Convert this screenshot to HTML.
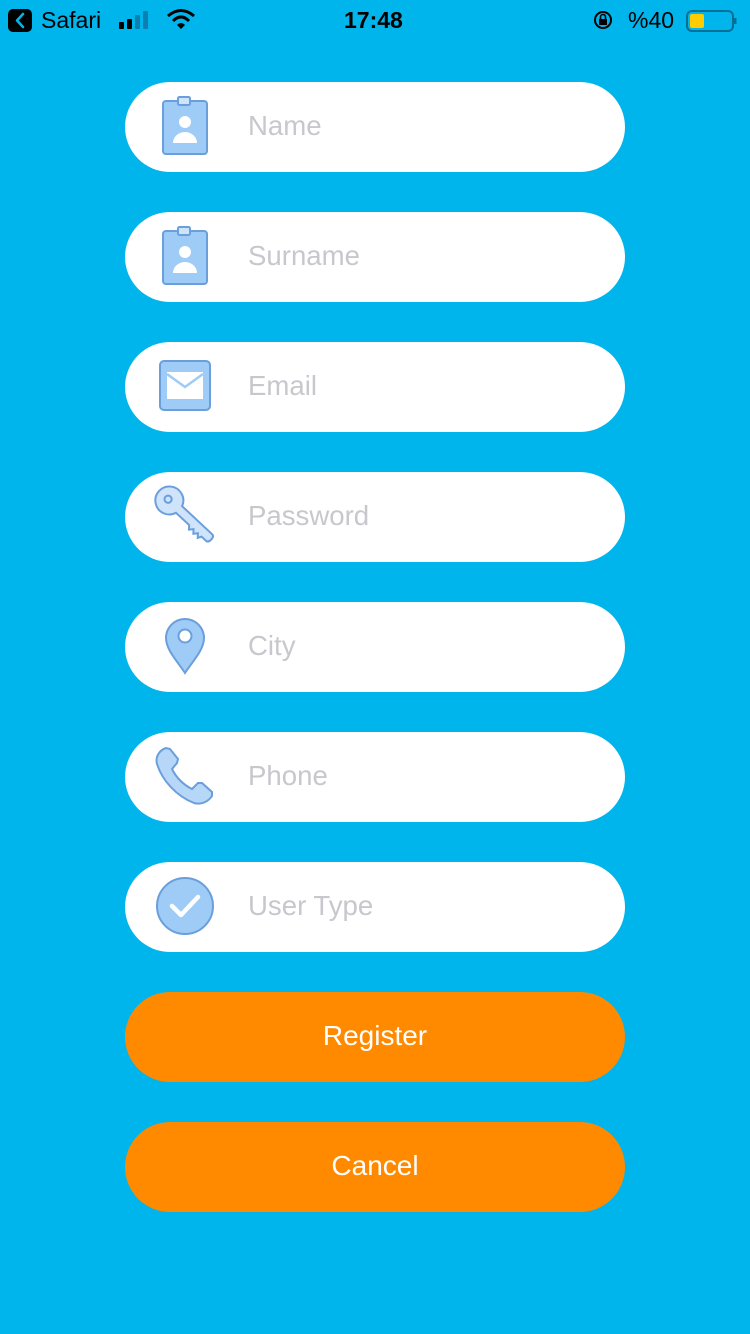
<!DOCTYPE html>
<html><head><meta charset="utf-8"><style>
html,body{margin:0;padding:0}
body{width:750px;height:1334px;background:#00B4EC;position:relative;overflow:hidden;font-family:"Liberation Sans",sans-serif}
.f{position:absolute;left:125px;width:500px;height:90px;border-radius:45px;background:#fff}
.f span{position:absolute;left:123px;top:-1px;line-height:90px;font-size:27.6px;color:#c7c7cd}
.b{position:absolute;left:125px;width:500px;height:90px;border-radius:45px;background:#FF8A00;color:#fff;font-size:28px;text-align:center;line-height:88px}
.sb{position:absolute;top:0;height:40px;line-height:40px;font-size:23px;color:#000}
</style></head><body>
<div class="sb" style="left:8px;width:24px;top:9px;height:23px;background:#000;border-radius:5px"></div>
<svg style="position:absolute;left:8px;top:9px" width="24" height="23"><path d="M15 5 L9 11.5 L15 18" stroke="#00B4EC" stroke-width="2.6" fill="none" stroke-linecap="round" stroke-linejoin="round"/></svg>
<div class="sb" style="left:41px">Safari</div>
<svg style="position:absolute;left:119px;top:10px" width="36" height="20"><rect x="0" y="12" width="5" height="7" rx="1" fill="#000"/><rect x="8" y="9" width="5" height="10" rx="1" fill="#000"/><rect x="16" y="5" width="5" height="14" rx="1" fill="#0a7fb0"/><rect x="24" y="1" width="5" height="18" rx="1" fill="#0a7fb0"/></svg>
<svg style="position:absolute;left:166px;top:8px" width="30" height="22"><path d="M2 8 Q15 -3 28 8" stroke="#000" stroke-width="3" fill="none"/><path d="M7 13 Q15 5 23 13" stroke="#000" stroke-width="3" fill="none"/><path d="M11 17 L15 21 L19 17 Q15 13 11 17Z" fill="#000"/></svg>
<div class="sb" style="left:344px;font-weight:bold">17:48</div>
<svg style="position:absolute;left:592px;top:10px" width="22" height="20"><circle cx="11" cy="10" r="8" stroke="#000" stroke-width="2" fill="none"/><rect x="7" y="9" width="8" height="6" fill="#000"/><path d="M8.5 9 V7 a2.5 2.5 0 0 1 5 0 V9" stroke="#000" stroke-width="1.6" fill="none"/></svg>
<div class="sb" style="left:628px">%40</div>
<svg style="position:absolute;left:686px;top:8px" width="52" height="26"><rect x="1" y="3" width="46" height="20" rx="5" stroke="#0a6f96" stroke-width="2" fill="none"/><rect x="4" y="6" width="14" height="14" rx="2" fill="#FFCC00"/><rect x="48" y="10" width="2.5" height="6" fill="#0a6f96"/></svg>

<div class="f" style="top:82px"><span>Name</span></div>
<div class="f" style="top:212px"><span>Surname</span></div>
<div class="f" style="top:342px"><span>Email</span></div>
<div class="f" style="top:472px"><span>Password</span></div>
<div class="f" style="top:602px"><span>City</span></div>
<div class="f" style="top:732px"><span>Phone</span></div>
<div class="f" style="top:862px"><span>User Type</span></div>
<div class="b" style="top:992px">Register</div>
<div class="b" style="top:1122px">Cancel</div>

<svg style="position:absolute;left:0;top:0" width="750" height="1334">
<g stroke="#6a9fdc" stroke-width="2" fill="#9fcbf7">
 <rect x="163" y="101" width="44" height="53" rx="3"/><rect x="178" y="97" width="12" height="8" rx="1.5" fill="#cfe4fb"/>
 <rect x="163" y="231" width="44" height="53" rx="3"/><rect x="178" y="227" width="12" height="8" rx="1.5" fill="#cfe4fb"/>
 <rect x="160" y="361" width="50" height="49" rx="4"/>
 <!-- key -->
 <g transform="translate(171,502) rotate(43)" fill="#cfe4fb">
  <path d="M11 -4.5 L52 -4.5 Q55 -4.5 55 0 Q55 4.5 52 4.5 L46 4.5 L44 8 L41 4.5 L38 8 L35 4.5 L32 8 L29 4.5 L11 4.5 A14 14 0 1 1 11 -4.5Z"/>
  <circle cx="-4" cy="0" r="3.6"/>
 </g>
 <path d="M185 619a19 19 0 0 1 19 19c0 12 -12 24 -19 35c-7 -11 -19 -23 -19 -35a19 19 0 0 1 19 -19Z"/>
 <path d="M166 748 C160 750 155 756 157 764 C162 780 176 796 194 803 C201 805 208 802 212 796 L212 792 L202 783 L198 783 L192 789 C182 784 176 777 172 769 L177 763 L178 759 L170 749Z" fill="#b7d7f9"/>
 <circle cx="185" cy="906" r="28"/>
</g>
<g fill="#fff">
 <circle cx="185" cy="122" r="6"/><path d="M173 143 a12 11 0 0 1 24 0Z"/>
 <circle cx="185" cy="252" r="6"/><path d="M173 273 a12 11 0 0 1 24 0Z"/>
 <rect x="167" y="372" width="36" height="27"/>
 <circle cx="185" cy="636" r="6.5" stroke="#6a9fdc" stroke-width="2"/>
</g>
<path d="M167 374 L185 387 L203 374" stroke="#9fcbf7" stroke-width="2.5" fill="none"/>
<path d="M172 906 L181 915 L198 897" stroke="#fff" stroke-width="4.5" fill="none" stroke-linecap="round" stroke-linejoin="round"/>
</svg>
</body></html>
